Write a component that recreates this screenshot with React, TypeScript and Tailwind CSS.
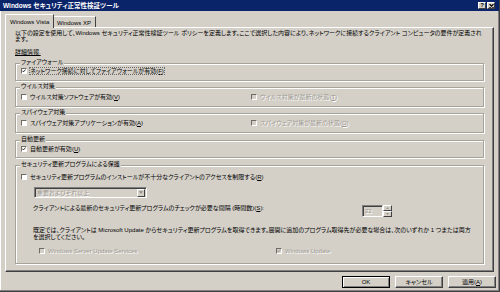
import type { ReactNode } from 'react';

const ui = "font-['Liberation_Sans','Noto_Sans_CJK_JP',sans-serif] [font-feature-settings:'palt']";
const dim = 'text-[#9c9890] [text-shadow:1px_1px_0_#fff]';

function Check({ on = false, off = false }: { on?: boolean; off?: boolean }) {
    return (
        <span
            className={`relative inline-block w-[6px] h-[6px] shrink-0 border border-t-[#6e6b65] border-l-[#6e6b65] border-r-white border-b-white ${off ? 'bg-[#d4d0c8]' : 'bg-white'}`}
        >
            {on && (
                <svg viewBox="0 0 6 6" className="absolute inset-0 w-[4px] h-[4px]">
                    <path d="M0.5 2.5 L2.2 4.3 L5.5 0.8" fill="none" stroke={off ? '#8a877f' : '#000'} strokeWidth="1.3" />
                </svg>
            )}
        </span>
    );
}

// label with mnemonic letter, e.g. 有効(F)
function Label({ text, k, off = false, focus = false }: { text: string; k?: string; off?: boolean; focus?: boolean }) {
    return (
        <span className={`whitespace-nowrap leading-[6px] ${off ? dim : 'text-black'} ${focus ? 'outline outline-1 outline-dotted outline-[#6b6b6b]' : ''}`}>
            {text}
            {k && (
                <>
                    (<span className="underline">{k}</span>)
                </>
            )}
        </span>
    );
}

function Box({ text, k, on, off, focus }: { text: string; k?: string; on?: boolean; off?: boolean; focus?: boolean }) {
    return (
        <div className="flex items-center gap-[3px] h-[7px]">
            <Check on={on} off={off} />
            <Label text={text} k={k} off={off} focus={focus} />
        </div>
    );
}

function Group({ title, className = '', children }: { title: string; className?: string; children: ReactNode }) {
    return (
        <div className={`relative border border-[#a6a39b] shadow-[1px_1px_0_#fff,inset_1px_1px_0_#fff] ${className}`}>
            <span className="absolute left-[4px] top-[-5px] bg-[#d4d0c8] px-[1px] leading-[7px] whitespace-nowrap">{title}</span>
            {children}
        </div>
    );
}

function Btn({ children, def = false }: { children: ReactNode; def?: boolean }) {
    return (
        <button
            className={`w-[48px] h-[12px] flex items-center justify-center bg-[#d4d0c8] leading-[6px] text-black ${
                def
                    ? 'border border-black shadow-[inset_1px_1px_0_#fff,inset_-1px_-1px_0_#808080]'
                    : 'border border-t-white border-l-white border-r-[#404040] border-b-[#404040] shadow-[inset_-1px_-1px_0_#808080]'
            }`}
        >
            {children}
        </button>
    );
}

export default function App() {
    return (
        <div className={`w-[500px] h-[292px] overflow-hidden bg-[#d4d0c8] text-[6px] text-black border-r border-b border-[#404040] shadow-[inset_-1px_-1px_0_#808080,inset_1px_0_0_#fff] ${ui}`}>
            {/* title bar */}
            <div className="h-[11px] bg-[#0a246a] flex items-center pl-[3px] pr-[4px]">
                <span className="text-white font-bold text-[6.5px] leading-[7px] whitespace-nowrap">Windows セキュリティ正常性検証ツール</span>
                <div className="ml-auto flex gap-[1px]">
                    <span className="w-[8px] h-[7px] flex items-center justify-center bg-[#d4d0c8] border border-t-white border-l-white border-r-[#404040] border-b-[#404040] text-[6px] font-bold leading-[5px]">?</span>
                    <span className="w-[8px] h-[7px] flex items-center justify-center bg-[#d4d0c8] border border-t-white border-l-white border-r-[#404040] border-b-[#404040]">
                        <svg viewBox="0 0 5 4" className="w-[5px] h-[4px]">
                            <path d="M0.5 0 L4.5 4 M4.5 0 L0.5 4" stroke="#000" strokeWidth="1.1" />
                        </svg>
                    </span>
                </div>
            </div>

            {/* tabs */}
            <div className="mt-[3px] ml-[5px] flex items-end h-[13px]">
                <div className="relative z-10 h-[14px] mb-[-1px] w-[49px] bg-[#d4d0c8] border-l border-t border-r border-l-white border-t-white border-r-[#404040] pl-[4px] pt-[4px] leading-[6px] whitespace-nowrap">
                    Windows Vista
                </div>
                <div className="h-[11px] w-[42px] border-t border-r border-t-white border-r-[#404040] pl-[3px] pt-[3px] leading-[6px] whitespace-nowrap">
                    Windows XP
                </div>
            </div>

            {/* tab page */}
            <div className="ml-[5px] w-[489px] h-[245px] border border-t-white border-l-white border-r-[#404040] border-b-[#404040] shadow-[inset_-1px_-1px_0_#808080] px-[9px] pt-[2px]">
                <p className="leading-[6px] whitespace-nowrap">
                    以下の設定を使用して、Windows セキュリティ正常性検証ツール ポリシーを定義します。ここで選択した内容により、ネットワークに接続するクライアント コンピュータの要件が定義され
                    <br />
                    ます。
                </p>
                <p className="mt-[7px] leading-[6px]">
                    <span className="underline">詳細情報.</span>
                </p>

                <Group title="ファイアウォール" className="mt-[8px] h-[18px] pt-[3px] pl-[5px]">
                    <Box text="ネットワーク接続に対してファイアウォールが有効" k="F" on focus />
                </Group>

                <Group title="ウイルス対策" className="mt-[6px] h-[20px] pt-[5px] pl-[5px]">
                    <div className="flex">
                        <div className="w-[230px]">
                            <Box text="ウイルス対策ソフトウェアが有効" k="V" />
                        </div>
                        <Box text="ウイルス対策が最新の状態" k="T" off />
                    </div>
                </Group>

                <Group title="スパイウェア対策" className="mt-[6px] h-[20px] pt-[5px] pl-[5px]">
                    <div className="flex">
                        <div className="w-[230px]">
                            <Box text="スパイウェア対策アプリケーションが有効" k="A" />
                        </div>
                        <Box text="スパイウェア対策が最新の状態" k="O" off />
                    </div>
                </Group>

                <Group title="自動更新" className="mt-[7px] h-[18px] pt-[4px] pl-[5px]">
                    <Box text="自動更新が有効" k="U" on />
                </Group>

                <Group title="セキュリティ更新プログラムによる保護" className="mt-[7px] h-[99px] pt-[7px] pl-[5px]">
                    <Box text="セキュリティ更新プログラムのインストールが不十分なクライアントのアクセスを制限する" k="R" />

                    {/* severity drop-down (disabled) */}
                    <div className="mt-[7px] ml-[13px] w-[113px] h-[11px] flex items-center border border-t-[#808080] border-l-[#808080] border-r-white border-b-white shadow-[inset_1px_1px_0_#404040] pl-[2px] pr-[1px]">
                        <span className={`leading-[6px] whitespace-nowrap ${dim}`}>重要およびそれ以上</span>
                        <span className="ml-auto w-[8px] h-[8px] flex items-center justify-center border border-t-white border-l-white border-r-[#404040] border-b-[#404040]">
                            <svg viewBox="0 0 5 3" className="w-[4px] h-[3px]">
                                <path d="M0 0 H5 L2.5 3 Z" fill="#8a877f" />
                            </svg>
                        </span>
                    </div>

                    {/* interval */}
                    <div className="mt-[7px] ml-[12px] flex items-start">
                        <span className="w-[329px] leading-[6px] whitespace-nowrap">
                            クライアントによる最新のセキュリティ更新プログラムのチェックが必要な間隔 (時間数)(<span className="underline">S</span>):
                        </span>
                        <div className="flex">
                            <div className="w-[21px] h-[12px] flex items-center pl-[2px] border border-t-[#808080] border-l-[#808080] border-r-white border-b-white shadow-[inset_1px_1px_0_#404040]">
                                <span className={`leading-[6px] ${dim}`}>22</span>
                            </div>
                            <div className="flex flex-col">
                                {[0, 1].map((i) => (
                                    <span key={i} className="w-[9px] h-[6px] flex items-center justify-center border border-t-white border-l-white border-r-[#404040] border-b-[#404040]">
                                        <svg viewBox="0 0 4 2" className="w-[3px] h-[2px]">
                                            <path d={i === 0 ? 'M0 2 H4 L2 0 Z' : 'M0 0 H4 L2 2 Z'} fill="#8a877f" />
                                        </svg>
                                    </span>
                                ))}
                            </div>
                        </div>
                    </div>

                    <p className="mt-[10px] ml-[12px] leading-[7px] whitespace-nowrap">
                        既定では、クライアントは Microsoft Update からセキュリティ更新プログラムを取得できます。展開に追加のプログラム取得先が必要な場合は、次のいずれか 1 つまたは両方
                        <br />
                        を選択してください。
                    </p>

                    <div className="mt-[6px] ml-[18px] flex">
                        <div className="w-[237px]">
                            <Box text="Windows Server Update Services" off />
                        </div>
                        <Box text="Windows Update" on off />
                    </div>
                </Group>
            </div>

            {/* dialog buttons */}
            <div className="mt-[4px] mr-[3px] flex justify-end gap-[5px]">
                <Btn def>OK</Btn>
                <Btn>キャンセル</Btn>
                <Btn>
                    適用(<span className="underline">A</span>)
                </Btn>
            </div>
        </div>
    );
}
